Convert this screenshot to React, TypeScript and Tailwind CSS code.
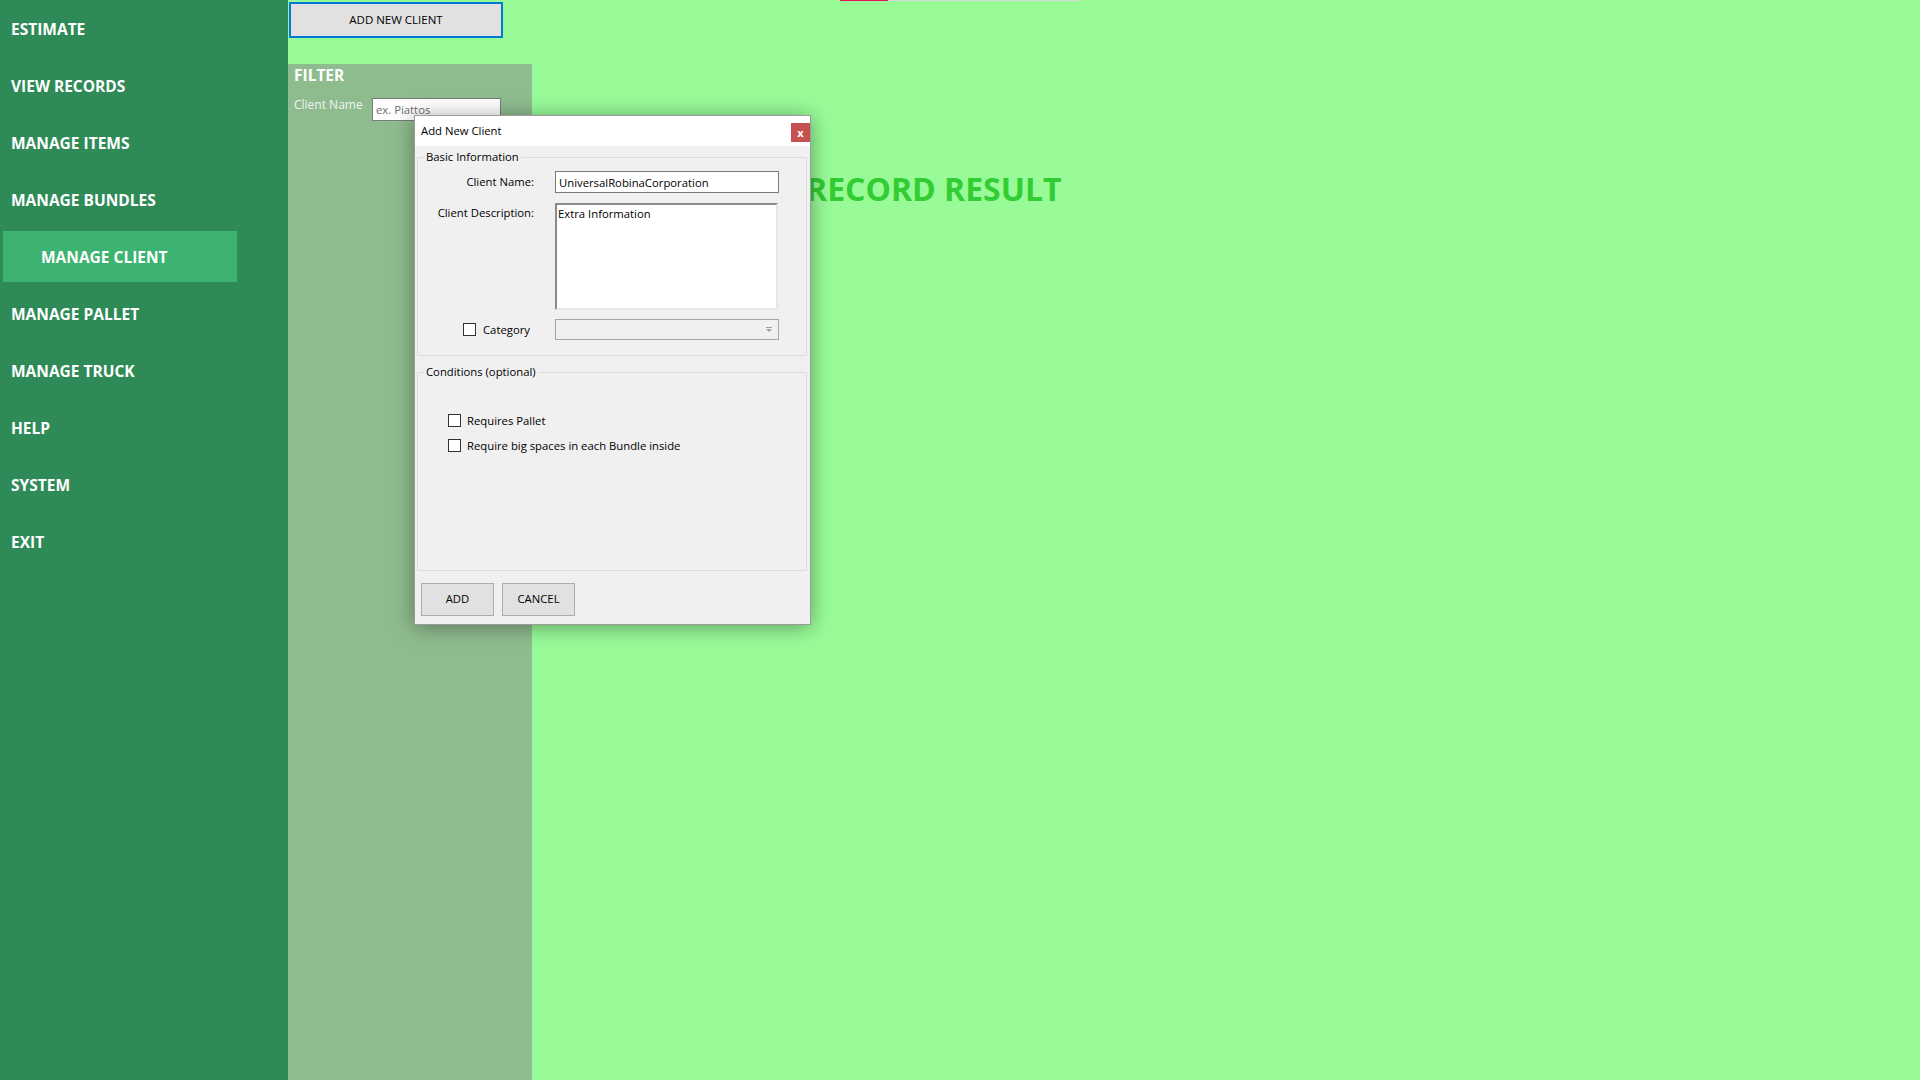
import React from "react";

const items = [
  "ESTIMATE",
  "VIEW RECORDS",
  "MANAGE ITEMS",
  "MANAGE BUNDLES",
  "MANAGE CLIENT",
  "MANAGE PALLET",
  "MANAGE TRUCK",
  "HELP",
  "SYSTEM",
  "EXIT",
];

function Check() {
  return <div className="w-[13px] h-[13px] shrink-0 bg-white border border-[#333333]" />;
}

export default function App() {
  return (
    <div className="flex h-[1080px] w-[1920px] overflow-hidden font-['Open_Sans',sans-serif]">
      {/* Sidebar */}
      <div className="w-[288px] shrink-0 bg-[#2e8b57] flex flex-col">
        {items.map((it) =>
          it === "MANAGE CLIENT" ? (
            <div key={it} className="h-[57px] pt-[3px] pb-[3px]">
              <div className="ml-[3px] w-[234px] h-full bg-[#3cb371] flex items-center pl-[38px] text-white font-bold text-[15.5px] leading-[22px]">
                {it}
              </div>
            </div>
          ) : (
            <div key={it} className="h-[57px] flex items-center pl-[11px] text-white font-bold text-[15.5px] leading-[22px]">
              {it}
            </div>
          )
        )}
      </div>

      {/* Main */}
      <div className="flex-1 flex flex-col bg-[#98fb98] relative">
        <div className="h-[64px] shrink-0 flex items-start">
          <button className="ml-[1px] mt-[2px] w-[214px] h-[36px] border-2 border-[#0078d7] bg-[#e1e1e1] text-[11.5px] text-black">
            ADD NEW CLIENT
          </button>
          <div className="ml-[337px] flex h-[1px] w-[240px]">
            <div className="w-[48px] bg-[#e8105a]" />
            <div className="flex-1 bg-[#d9d9d9]" />
          </div>
        </div>
        <div className="flex flex-1">
          <div className="w-[244px] shrink-0 bg-[#8fbc8f] flex flex-col pl-[6px]">
            <div className="text-white font-bold text-[15.5px] leading-[22px]">FILTER</div>
            <div className="mt-[10px] flex items-start">
              <div className="w-[78px] text-[#f2f2f2] text-[12px] leading-[18px]">Client Name</div>
              <input
                readOnly
                placeholder="ex. Piattos"
                className="mt-[2px] w-[129px] h-[23px] bg-white border border-[#7a7a7a] px-[3px] text-[11.3px] placeholder:text-[#6d6d6d] outline-none"
              />
            </div>
          </div>
          <div className="flex-1 pt-[108px] pl-[274px]">
            <div className="text-[#32cd32] font-bold text-[32px] leading-[33px]">RECORD RESULT</div>
          </div>
        </div>

        {/* Dialog */}
        <div className="absolute left-[126px] top-[115px] w-[397px] h-[510px] bg-[#f0f0f0] border border-[#9b9b9b] shadow-[0_2px_20px_rgba(0,0,0,0.38)] flex flex-col text-[11.3px] text-black">
          <div className="h-[30px] bg-white flex items-start justify-between pl-[6px]">
            <div className="leading-[30px]">Add New Client</div>
            <div className="mt-[7px] w-[19px] h-[19px] bg-[#c75050] flex items-center justify-center text-white text-[11px] font-bold leading-none pb-[1px]">
              x
            </div>
          </div>
          <div className="flex flex-col pl-[2px] pr-[3px]">
            {/* Group 1 */}
            <div className="relative mt-[11px] h-[199px] border border-[#dcdcdc] flex flex-col">
              <span className="absolute -top-[9px] left-[6px] px-[2px] bg-[#f0f0f0] leading-[16px]">Basic Information</span>
              <div className="mt-[13px] flex items-center">
                <div className="w-[116px] text-right leading-[16px]">Client Name:</div>
                <input
                  readOnly
                  value="UniversalRobinaCorporation"
                  className="ml-[21px] w-[224px] h-[22px] bg-white border border-[#7a7a7a] px-[3px] text-[11.3px] outline-none"
                />
              </div>
              <div className="mt-[10px] flex items-start">
                <div className="w-[116px] text-right leading-[16px] pt-[2px]">Client Description:</div>
                <div className="ml-[21px] w-[223px] h-[107px] bg-white border-2 border-t-[#8a8a8a] border-l-[#8a8a8a] border-r-[#e6e6e6] border-b-[#e6e6e6] px-[1px] pt-[1px] leading-[16px]">
                  Extra Information
                </div>
              </div>
              <div className="mt-[9px] flex items-center">
                <div className="w-[116px] flex items-center pl-[45px]">
                  <Check />
                  <span className="ml-[7px] leading-[16px]">Category</span>
                </div>
                <div className="ml-[21px] w-[224px] h-[21px] bg-[#f0f0f0] border border-[#a6a6a6] flex items-center justify-end pr-[6px]">
                  <svg width="6" height="5" viewBox="0 0 6 5">
                    <rect x="0" y="0" width="6" height="1" fill="#a0a0a0" />
                    <path d="M0 2 L6 2 L3 5 Z" fill="#a0a0a0" />
                  </svg>
                </div>
              </div>
            </div>

            {/* Group 2 */}
            <div className="relative mt-[16px] h-[199px] border border-[#dcdcdc] flex flex-col pl-[30px] pt-[41px] gap-[12px]">
              <span className="absolute -top-[9px] left-[6px] px-[2px] bg-[#f0f0f0] leading-[16px]">Conditions (optional)</span>
              <div className="h-[13px] flex items-center">
                <Check />
                <span className="ml-[6px] leading-[16px]">Requires Pallet</span>
              </div>
              <div className="h-[13px] flex items-center">
                <Check />
                <span className="ml-[6px] leading-[16px]">Require big spaces in each Bundle inside</span>
              </div>
            </div>

            {/* Buttons */}
            <div className="mt-[12px] pl-[4px] flex gap-[8px]">
              <button className="w-[73px] h-[33px] bg-[#e1e1e1] border border-[#adadad] text-[11.3px]">ADD</button>
              <button className="w-[73px] h-[33px] bg-[#e1e1e1] border border-[#adadad] text-[11.3px]">CANCEL</button>
            </div>
          </div>
        </div>
      </div>
    </div>
  );
}
